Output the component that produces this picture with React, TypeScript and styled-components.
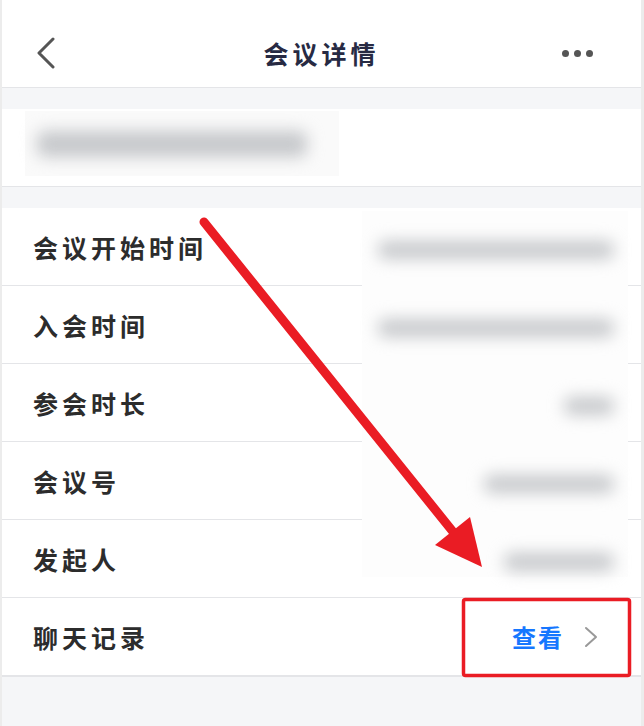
import React from 'react';
import styled, { createGlobalStyle } from 'styled-components';

const GlobalStyle = createGlobalStyle`
  html, body {
    margin: 0;
    padding: 0;
    background: #ececec;
  }
  body {
    font-family: "Noto Sans CJK SC", "Noto Sans", sans-serif;
  }
`;

const Screen = styled.div`
  position: relative;
  width: 644px;
  height: 726px;
  overflow: hidden;
  background: #ececec;
`;

const Page = styled.div`
  margin: 0 3px 0 2px;
  height: 100%;
  background: #f5f6f8;
`;

const NavBar = styled.header`
  height: 88px;
  box-sizing: border-box;
  padding-top: 19px;
  display: grid;
  grid-template-columns: 80px 1fr 80px;
  align-items: center;
  background: #fff;
  border-bottom: 1px solid #e4e5e8;
`;

const NavButton = styled.div<{ $align: 'start' | 'end' }>`
  display: flex;
  justify-content: ${(p) => (p.$align === 'start' ? 'flex-start' : 'flex-end')};
  padding: ${(p) => (p.$align === 'start' ? '0 0 0 34px' : '0 48px 0 0')};
`;

const Title = styled.h1`
  margin: 0;
  text-align: center;
  font-size: 25px;
  font-weight: 700;
  letter-spacing: 4px;
  color: #272a43;
`;

const Dots = styled.div`
  display: flex;
  gap: 5px;

  span {
    width: 7px;
    height: 7px;
    border-radius: 50%;
    background: #555;
  }
`;

const Section = styled.section`
  margin-top: 21px;
  background: #fff;
  border-bottom: 1px solid #e4e5e8;
`;

const TopicCard = styled(Section)`
  padding: 2px 0 0 23px;
  height: 75px;
`;

const Blurred = styled.div`
  width: 314px;
  height: 65px;
  background: #fafafa;
  display: flex;
  align-items: center;
  padding-left: 12px;
  box-sizing: border-box;
`;

const BlurBar = styled.div<{ $w: number; $h?: number }>`
  width: ${(p) => p.$w}px;
  height: ${(p) => p.$h ?? 18}px;
  background: #c6c8cb;
  border-radius: 8px;
  filter: blur(8px);
`;

const Row = styled.div`
  height: 77px;
  display: flex;
  align-items: center;
  justify-content: space-between;
  padding: 0 43px 0 31px;
  border-bottom: 1px solid #e4e5e8;
`;

const Label = styled.span`
  font-size: 25px;
  font-weight: 700;
  letter-spacing: 4px;
  color: #2c2c2c;
`;

const LinkValue = styled.span`
  display: flex;
  align-items: center;
  gap: 20px;
  font-size: 24px;
  font-weight: 700;
  letter-spacing: 2px;
  color: #1677ff;
`;

const Redaction = styled.div`
  position: absolute;
  left: 362px;
  top: 211px;
  width: 266px;
  height: 366px;
  background: #fdfdfd;
  display: flex;
  flex-direction: column;
`;

const RedactionSlot = styled.div`
  height: 78px;
  flex: none;
  display: flex;
  align-items: center;
  justify-content: flex-end;
  padding-right: 14px;
`;

const Annotation = styled.svg`
  position: absolute;
  left: 0;
  top: 0;
  pointer-events: none;
`;

const values = [236, 236, 50, 130, 110];

const labels = ['会议开始时间', '入会时间', '参会时长', '会议号', '发起人'];

export default function App() {
  return (
    <Screen>
      <GlobalStyle />
      <Page>
        <NavBar>
          <NavButton $align="start">
            <svg width="20" height="32" viewBox="0 0 20 32">
              <polyline points="17,2 3,16 17,30" fill="none" stroke="#555" strokeWidth="3" strokeLinecap="round" strokeLinejoin="round" />
            </svg>
          </NavButton>
          <Title>会议详情</Title>
          <NavButton $align="end">
            <Dots>
              <span />
              <span />
              <span />
            </Dots>
          </NavButton>
        </NavBar>

        <TopicCard>
          <Blurred>
            <BlurBar $w={270} $h={26} />
          </Blurred>
        </TopicCard>

        <Section>
          {labels.map((l) => (
            <Row key={l}>
              <Label>{l}</Label>
            </Row>
          ))}
          <Row>
            <Label>聊天记录</Label>
            <LinkValue>
              查看
              <svg width="14" height="22" viewBox="0 0 14 22">
                <polyline points="2,2 12,11 2,20" fill="none" stroke="#999" strokeWidth="2" strokeLinecap="round" strokeLinejoin="round" />
              </svg>
            </LinkValue>
          </Row>
        </Section>
      </Page>

      <Redaction>
        {values.map((w, i) => (
          <RedactionSlot key={i}>
            <BlurBar $w={w} />
          </RedactionSlot>
        ))}
      </Redaction>

      <Annotation width="644" height="726" viewBox="0 0 644 726">
        <line x1="204" y1="222" x2="458" y2="538" stroke="#ea1c24" strokeWidth="9" strokeLinecap="round" />
        <polygon points="435,545 470,517 482,567" fill="#ea1c24" />
        <rect x="463.5" y="599.5" width="166" height="76" rx="2" fill="none" stroke="#ea1c24" strokeWidth="3.5" />
      </Annotation>
    </Screen>
  );
}
